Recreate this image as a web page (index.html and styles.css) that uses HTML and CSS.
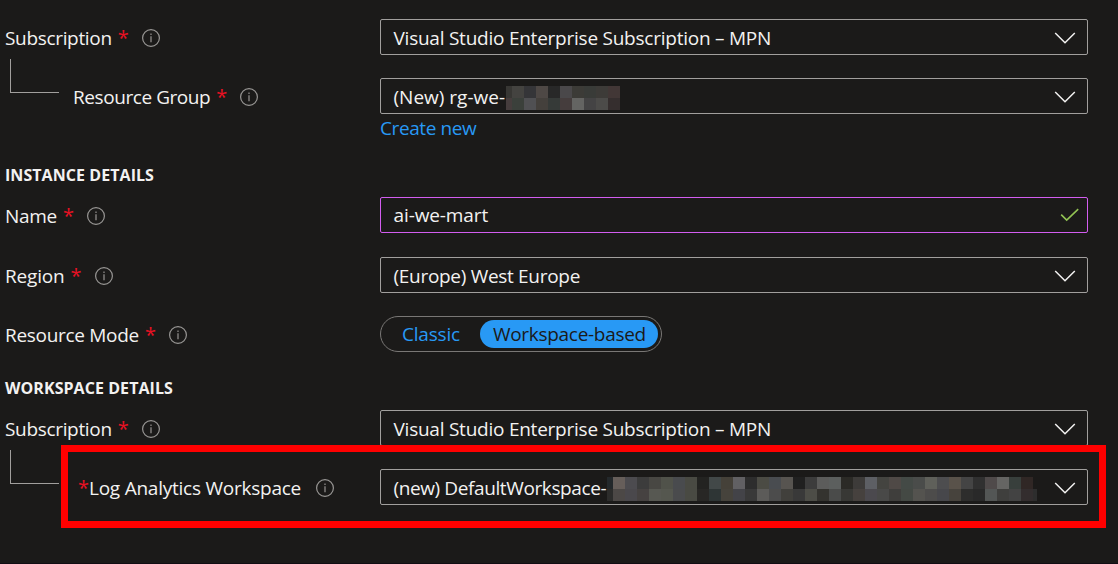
FILE: index.html
```html
<!DOCTYPE html>
<html lang="en">
<head>
<meta charset="utf-8">
<title>Application Insights</title>
<link rel="stylesheet" href="styles.css">
</head>
<body>
<svg width="0" height="0" class="defs">
  <symbol id="info" viewBox="0 0 20 20"><circle cx="10" cy="10" r="8.4" fill="none" stroke="#989694" stroke-width="1.2"/><path d="M10 8.3v6M10 5.5v1.6" stroke="#858381" stroke-width="1.4"/></symbol>
  <symbol id="chevron" viewBox="0 0 22 12"><path d="M1.2 1 11 10.8 20.8 1" fill="none" stroke="#f3f2f1" stroke-width="1.5"/></symbol>
</svg>
<main class="form">
  <div class="row">
    <label class="label"><span class="text subscription">Subscription</span><span class="star">*</span><svg class="info"><use href="#info"/></svg></label>
    <div class="field"><span class="text visual">Visual Studio Enterprise Subscription – MPN</span><svg class="chevron"><use href="#chevron"/></svg></div>
  </div>
  <div class="row group">
    <label class="label"><i class="branch"></i><span class="text rg">Resource Group</span><span class="star">*</span><svg class="info"><use href="#info"/></svg></label>
    <div class="field"><span class="text newrg">(New) rg-we-</span>
      <svg class="mosaic" width="114" height="24" shape-rendering="crispEdges">
        <path fill="#383734" d="M0 0h6v12H0z"/><path fill="#444340" d="M6 0h12v12H6z"/><path fill="#353538" d="M18 0h12v12H18z"/><path fill="#4e4845" d="M30 0h12v12H30z"/><path fill="#282828" d="M42 0h12v12H42z"/><path fill="#4a484a" d="M54 0h12v12H54z"/><path fill="#3c3b37" d="M66 0h12v12H66z"/><path fill="#393b38" d="M78 0h12v12H78z"/><path fill="#3d3b38" d="M90 0h12v12H90z"/><path fill="#423736" d="M102 0h12v12h-12z"/>
        <path fill="#463d3d" d="M0 12h6v12H0z"/><path fill="#3b403b" d="M6 12h12v12H6z"/><path fill="#505053" d="M18 12h12v12H18z"/><path fill="#44403c" d="M30 12h12v12H30z"/><path fill="#363a38" d="M42 12h12v12H42z"/><path fill="#453d3d" d="M54 12h12v12H54z"/><path fill="#646462" d="M66 12h12v12H66z"/><path fill="#444344" d="M78 12h12v12H78z"/><path fill="#4c4b49" d="M90 12h12v12H90z"/><path fill="#352e2e" d="M102 12h12v12h-12z"/>
      </svg>
      <svg class="chevron"><use href="#chevron"/></svg></div>
  </div>
  <a class="create text">Create new</a>
  <h2 class="heading instance">INSTANCE DETAILS</h2>
  <div class="row name-row">
    <label class="label"><span class="text name">Name</span><span class="star">*</span><svg class="info"><use href="#info"/></svg></label>
    <div class="field active"><span class="text mart">ai-we-mart</span><svg class="check" viewBox="0 0 20 14"><path d="m1.2 6.6 5.5 5.5L18.2 1.2" fill="none" stroke="#92c353" stroke-width="1.6"/></svg></div>
  </div>
  <div class="row region-row">
    <label class="label"><span class="text region">Region</span><span class="star">*</span><svg class="info"><use href="#info"/></svg></label>
    <div class="field"><span class="text europe">(Europe) West Europe</span><svg class="chevron"><use href="#chevron"/></svg></div>
  </div>
  <div class="row mode-row">
    <label class="label"><span class="text mode">Resource Mode</span><span class="star">*</span><svg class="info"><use href="#info"/></svg></label>
    <div class="toggle"><span class="option text classic">Classic</span><span class="option selected text based">Workspace-based</span></div>
  </div>
  <h2 class="heading workspace">WORKSPACE DETAILS</h2>
  <div class="row ws-row">
    <label class="label"><span class="text subscription">Subscription</span><span class="star">*</span><svg class="info"><use href="#info"/></svg></label>
    <div class="field"><span class="text visual">Visual Studio Enterprise Subscription – MPN</span><svg class="chevron"><use href="#chevron"/></svg></div>
  </div>
  <div class="row group">
    <label class="label log"><i class="branch"></i><span class="star">*</span><span class="text law">Log Analytics Workspace</span><svg class="info"><use href="#info"/></svg></label>
    <div class="field"><span class="text default">(new) DefaultWorkspace-</span>
      <svg class="mosaic" width="430" height="24" shape-rendering="crispEdges">
        <path fill="#23282b" d="M0 0h6v12H0z"/><path fill="#665e5a" d="M6 0h12v12H6z"/><path fill="#4c4b4f" d="M18 0h12v12H18z"/><path fill="#3c3c3c" d="M30 0h12v12H30z"/><path fill="#484743" d="M42 0h12v12H42z"/><path fill="#50524a" d="M54 0h12v12H54z"/><path fill="#494b4e" d="M66 0h12v12H66z"/><path fill="#494a43" d="M78 0h12v12H78z"/><path fill="#232321" d="M90 0h12v12H90z"/><path fill="#424848" d="M102 0h12v12h-12z"/><path fill="#454139" d="M114 0h12v12h-12z"/><path fill="#616063" d="M126 0h12v12h-12z"/><path fill="#2d2d2d" d="M138 0h12v12h-12z"/><path fill="#4b4b44" d="M150 0h12v12h-12z"/><path fill="#494c50" d="M162 0h12v12h-12z"/><path fill="#575450" d="M174 0h12v12h-12z"/><path fill="#202020" d="M186 0h12v12h-12z"/><path fill="#3c3c3c" d="M198 0h12v12h-12z"/><path fill="#5c5c5b" d="M210 0h12v12h-12z"/><path fill="#5c5f5e" d="M222 0h12v12h-12z"/><path fill="#2b2a26" d="M234 0h12v12h-12z"/><path fill="#3d3b39" d="M246 0h12v12h-12z"/><path fill="#5d5f64" d="M258 0h12v12h-12z"/><path fill="#444440" d="M270 0h12v12h-12z"/><path fill="#4f4946" d="M282 0h12v12h-12z"/><path fill="#444a46" d="M294 0h12v12h-12z"/><path fill="#4a4c4a" d="M306 0h12v12h-12z"/><path fill="#5f605a" d="M318 0h12v12h-12z"/><path fill="#4d4d4f" d="M330 0h12v12h-12z"/><path fill="#59524a" d="M342 0h12v12h-12z"/><path fill="#444" d="M354 0h12v12h-12z"/><path fill="#303030" d="M366 0h12v12h-12z"/><path fill="#4f4a4a" d="M378 0h12v12h-12z"/><path fill="#656563" d="M390 0h12v12h-12z"/><path fill="#383f3c" d="M402 0h12v12h-12z"/><path fill="#302725" d="M414 0h12v12h-12z"/>
        <path fill="#2c2c2b" d="M0 12h6v12H0z"/><path fill="#4c4846" d="M6 12h12v12H6z"/><path fill="#4a484c" d="M18 12h12v12H18z"/><path fill="#464241" d="M30 12h12v12H30z"/><path fill="#575852" d="M42 12h12v12H42z"/><path fill="#55574f" d="M54 12h12v12H54z"/><path fill="#4a4b4d" d="M66 12h12v12H66z"/><path fill="#494a43" d="M78 12h12v12H78z"/><path fill="#282725" d="M90 12h12v12H90z"/><path fill="#2e3535" d="M102 12h12v12h-12z"/><path fill="#46433c" d="M114 12h12v12h-12z"/><path fill="#434348" d="M126 12h12v12h-12z"/><path fill="#393939" d="M138 12h12v12h-12z"/><path fill="#5c5b59" d="M150 12h12v12h-12z"/><path fill="#4c4c4c" d="M162 12h12v12h-12z"/><path fill="#41403c" d="M174 12h12v12h-12z"/><path fill="#393939" d="M186 12h12v12h-12z"/><path fill="#4d4d47" d="M198 12h12v12h-12z"/><path fill="#34332f" d="M210 12h12v12h-12z"/><path fill="#4a4b4a" d="M222 12h12v12h-12z"/><path fill="#383835" d="M234 12h12v12h-12z"/><path fill="#46413e" d="M246 12h12v12h-12z"/><path fill="#4b494e" d="M258 12h12v12h-12z"/><path fill="#494948" d="M270 12h12v12h-12z"/><path fill="#3f3e3c" d="M282 12h12v12h-12z"/><path fill="#444944" d="M294 12h12v12h-12z"/><path fill="#54534f" d="M306 12h12v12h-12z"/><path fill="#4d4c4b" d="M318 12h12v12h-12z"/><path fill="#47474b" d="M330 12h12v12h-12z"/><path fill="#47433d" d="M342 12h12v12h-12z"/><path fill="#2d2d2c" d="M354 12h12v12h-12z"/><path fill="#292929" d="M366 12h12v12h-12z"/><path fill="#535655" d="M378 12h12v12h-12z"/><path fill="#3f3f3d" d="M390 12h12v12h-12z"/><path fill="#434343" d="M402 12h12v12h-12z"/><path fill="#332d2e" d="M414 12h12v12h-12z"/><path fill="#2d2d2d" d="M426 12h4v12h-4z"/>
      </svg>
      <svg class="chevron"><use href="#chevron"/></svg></div>
  </div>
  <div class="highlight"></div>
</main>
</body>
</html>
```
FILE: styles.css
```css
* { box-sizing: border-box; }
body {
  margin: 0;
  background: #1b1a19;
  color: #f3f2f1;
  font-family: "Open Sans", "Noto Sans", sans-serif;
  font-size: 19px;
}
.defs { display: block; }
.form {
  position: relative;
  height: 564px;
  padding: 19px 30px 0 5px;
  border-bottom: 1px solid #110d14;
  overflow: hidden;
}
.row { display: grid; grid-template-columns: 375px 708px; height: 36px; }
.group { margin-top: 23px; }
.label { display: flex; align-items: center; height: 36px; padding-top: 1px; }
.text { white-space: nowrap; line-height: 36px; }
.subscription { letter-spacing: -0.33px; }
.visual { letter-spacing: -0.24px; }
.rg { letter-spacing: -0.43px; }
.name { letter-spacing: -0.3px; }
.mart { letter-spacing: -0.1px; }
.region { letter-spacing: -0.17px; }
.europe { letter-spacing: -0.3px; }
.mode { letter-spacing: -0.3px; }
.classic { letter-spacing: -0.2px; }
.based { letter-spacing: -0.3px; }
.law { letter-spacing: -0.24px; }
.default { width: 213px; flex: none; letter-spacing: -0.39px; }
.newrg { width: 112px; flex: none; }
.star { color: #e81123; width: 9px; margin-left: 6px; font-size: 20px; line-height: 36px; }
.info { width: 20px; height: 20px; margin-left: 14px; }
.branch {
  width: 49px;
  height: 34px;
  margin: -42px 14px 0 5px;
  border: solid #a19f9d;
  border-width: 0 0 1px 1px;
  flex: none;
}
.field {
  display: flex;
  align-items: center;
  height: 36px;
  padding: 1px 11px 0 13px;
  border: 1px solid #a19f9d;
  border-radius: 2px;
}
.field .text { margin-left: -0.5px; }
.active { padding-top: 0; border-color: #d35df0; padding-right: 7px; }
.chevron { width: 22px; height: 12px; margin-left: auto; }
.check { width: 20px; height: 14px; margin-left: auto; }
.mosaic { flex: none; margin-top: 3px; margin-left: 0.5px; }
.create { display: block; height: 28px; margin-left: 375px; line-height: 28px; letter-spacing: -0.4px; color: #2899f5; }
.heading { margin: 0; font-size: 16px; font-weight: 700; line-height: 24px; letter-spacing: 0.06px; }
.instance { margin-top: 21px; }
.name-row { margin-top: 10px; }
.region-row { margin-top: 24px; }
.mode-row { margin-top: 23px; }
.workspace { margin-top: 24px; }
.ws-row { margin-top: 10px; }
.toggle {
  display: flex;
  align-items: center;
  width: 282px;
  height: 36px;
  padding: 0 3px 0 21px;
  border: 1px solid #797775;
  border-radius: 18px;
}
.option { height: 28px; line-height: 28px; color: #2899f5; }
.selected {
  width: 178px;
  margin-left: auto;
  padding-left: 13px;
  border-radius: 14px;
  background: #2899f5;
  color: #1b1a19;
}
.log .star { margin-left: 5px; width: 11px; }
.highlight {
  position: absolute;
  left: 61px;
  top: 445px;
  width: 1045px;
  height: 83px;
  border: 7px solid #f00;
}
```
